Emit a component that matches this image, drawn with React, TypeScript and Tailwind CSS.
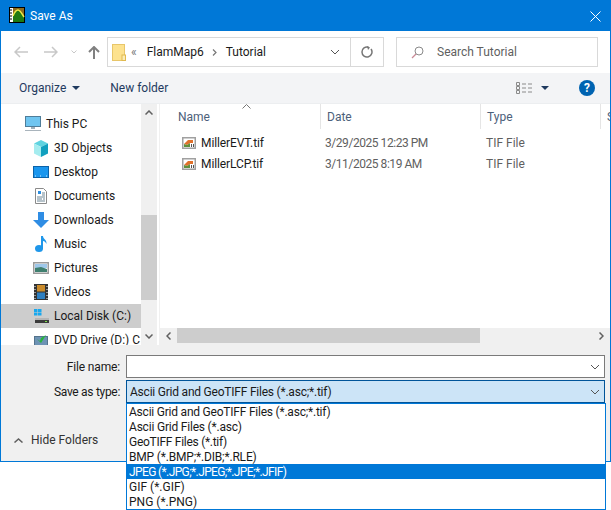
import type { ReactNode } from "react";

const font = { fontFamily: 'Roboto, "Liberation Sans", sans-serif' };

const types = [
  { label: "Ascii Grid and GeoTIFF Files (*.asc;*.tif)", track: "tracking-[-0.22px]" },
  { label: "Ascii Grid Files (*.asc)", track: "tracking-[-0.2px]" },
  { label: "GeoTIFF Files (*.tif)", track: "tracking-[-0.28px]" },
  { label: "BMP (*.BMP;*.DIB;*.RLE)", track: "tracking-[-0.18px]" },
  { label: "JPEG (*.JPG;*.JPEG;*.JPE;*.JFIF)", track: "tracking-[-0.62px]" },
  { label: "GIF (*.GIF)", track: "" },
  { label: "PNG (*.PNG)", track: "" },
];

function Chevron({ className = "" }: { className?: string }) {
  return (
    <svg width="10" height="6" viewBox="0 0 10 6" className={className}>
      <path d="M1 1l4 4 4-4" fill="none" stroke="#555" strokeWidth="1" />
    </svg>
  );
}

function Caret() {
  return (
    <svg width="8" height="4" viewBox="0 0 8 4">
      <path d="M0 0h8L4 4z" fill="#1f3a5f" />
    </svg>
  );
}

function AppIcon() {
  return (
    <svg width="16" height="16" viewBox="0 0 16 16" className="mr-[5px] mb-[2px]">
      <rect width="16" height="16" fill="#000" />
      <rect x="1" y="1" width="3" height="14" fill="#fff" />
      <path d="M1 3h2M1 6h2M1 9h2M1 12h2" stroke="#000" strokeWidth="1" />
      <rect x="4" y="1" width="11" height="14" fill="#8a6a1c" />
      <path d="M4 15V9c2-5 3-6 5-6s3 2 6 7v5z" fill="#1f7a12" />
      <path d="M4 9c2-5 3-6 5-6s3 2 6 7" fill="none" stroke="#f0e84a" strokeWidth="1.5" />
    </svg>
  );
}

function FolderIcon() {
  return (
    <svg width="14" height="17" viewBox="0 0 14 17">
      <rect x="0.5" y="0.5" width="12" height="16" fill="#fde28f" stroke="#e8c66a" />
      <rect x="10" y="11" width="3.5" height="5.5" fill="#fcecb5" stroke="#e0b94f" />
    </svg>
  );
}

function TifIcon() {
  return (
    <svg width="14" height="12" viewBox="0 0 14 12">
      <rect x="0.75" y="0.75" width="12.5" height="10.5" fill="#fff" stroke="#a0a0a0" strokeWidth="1.5" />
      <path d="M2 7l4-4h5v3H8L5 8z" fill="#e0702a" />
      <path d="M2 7l3 1 3-2v4H2z" fill="#5f8f3c" />
      <path d="M9 10V7h1v3zM11 10V7h1v3z" fill="#555" />
    </svg>
  );
}

const navIcons: Record<string, ReactNode> = {
  pc: (
    <svg width="16" height="16" viewBox="0 0 16 16">
      <rect x="0.5" y="0.5" width="15" height="10" fill="#6fc5f0" stroke="#4f7d99" />
      <rect x="6" y="11" width="4" height="2" fill="#9fb0ba" />
      <rect y="14" width="16" height="1" fill="#a9b4bc" />
    </svg>
  ),
  cube: (
    <svg width="16" height="17" viewBox="0 0 16 17">
      <path d="M8 0l7 3.500-7 3.500-7-3.500z" fill="#5fd3e0" />
      <path d="M1 3.500L8 7v10l-7-3.500z" fill="#a5ecef" />
      <path d="M15 3.500L8 7v10l7-3.500z" fill="#10a0bf" />
    </svg>
  ),
  desktop: (
    <svg width="16" height="12" viewBox="0 0 16 12">
      <rect x="0.5" y="0.5" width="15" height="11" fill="#1a96ee" stroke="#0b62a8" />
      <path d="M2 10h1M7 10h1M13 10h1" stroke="#d5ecff" strokeWidth="1" />
    </svg>
  ),
  docs: (
    <svg width="12" height="16" viewBox="0 0 12 16">
      <path d="M.5.5h8l3 3v12H.5z" fill="#fff" stroke="#8a8a8a" />
      <path d="M3 3h3v3H3z" fill="#2e8fe0" />
      <path d="M7 5h3M7 7h3M2 9h8M2 11h5M8 11h2M2 13h8" stroke="#6f8796" strokeWidth="1" />
    </svg>
  ),
  down: (
    <svg width="16" height="16" viewBox="0 0 16 16">
      <path d="M5 0h6v8h5l-8 8-8-8h5z" fill="#2f8de4" />
    </svg>
  ),
  music: (
    <svg width="12" height="16" viewBox="0 0 12 16">
      <ellipse cx="4" cy="12.500" rx="4" ry="3.500" fill="#1f97ea" />
      <path d="M6 0h2c0 3 4 3.500 3.500 8C10.500 6 9.500 5 8 5v8H6z" fill="#1f97ea" />
    </svg>
  ),
  pic: (
    <svg width="16" height="12" viewBox="0 0 16 12">
      <rect x="0.75" y="0.75" width="14.5" height="10.5" fill="#fff" stroke="#9a9a9a" strokeWidth="1.500" />
      <rect x="2" y="2" width="12" height="4" fill="#9fc8ea" />
      <path d="M2 6l6-1 6 2v3H2z" fill="#3f7f6f" />
    </svg>
  ),
  video: (
    <svg width="14" height="16" viewBox="0 0 14 16">
      <rect width="14" height="16" fill="#333" />
      <rect x="3" y="1" width="8" height="6.500" fill="#c98a2a" />
      <rect x="3" y="8.500" width="8" height="6.500" fill="#2f7fc0" />
      <path d="M1 2v1M1 5v1M1 8v1M1 11v1M1 14v1M13 2v1M13 5v1M13 8v1M13 11v1M13 14v1" stroke="#fff" strokeWidth="1" />
    </svg>
  ),
  disk: (
    <svg width="16" height="16" viewBox="0 0 16 16">
      <path d="M1 1h3.500v3H1zM5 1h3.500v3H5zM1 4.500h3.500v3H1zM5 4.500h3.500v3H5z" fill="#18a8ee" />
      <rect x="2" y="10" width="14" height="2" fill="#b5b5b5" />
      <rect x="2" y="12" width="14" height="3" fill="#3b3b3b" />
      <rect x="12" y="13" width="2" height="1" fill="#7be04a" />
    </svg>
  ),
  dvd: (
    <svg width="16" height="16" viewBox="0 0 16 16">
      <rect x="1.500" y="4.500" width="13" height="11" fill="#6d93b4" stroke="#54738c" />
      <path d="M4 7l4 4 5-8-5 3-1 3z" fill="#27b53c" />
    </svg>
  ),
};

const navItems = [
  { label: "This PC", icon: "pc", top: true },
  { label: "3D Objects", icon: "cube" },
  { label: "Desktop", icon: "desktop" },
  { label: "Documents", icon: "docs" },
  { label: "Downloads", icon: "down" },
  { label: "Music", icon: "music" },
  { label: "Pictures", icon: "pic" },
  { label: "Videos", icon: "video" },
  { label: "Local Disk (C:)", icon: "disk", selected: true },
  { label: "DVD Drive (D:) C", icon: "dvd" },
];

const files = [
  { name: "MillerEVT.tif", date: "3/29/2025 12:23 PM" },
  { name: "MillerLCP.tif", date: "3/11/2025 8:19 AM" },
];

export default function App() {
  return (
    <div className="relative w-[611px] h-[510px] bg-white text-[12px] text-[#1a1a1a] overflow-hidden" style={font}>
      <div className="flex flex-col w-[611px] h-[462px] border border-[#0078d7]">
        {/* title bar */}
        <div className="flex items-center h-[30px] shrink-0 bg-[#0078d7] pl-[8px] pr-[9px] text-white">
          <AppIcon />
          <span>Save As</span>
          <svg width="11" height="11" viewBox="0 0 11 11" className="ml-auto">
            <path d="M.5.500l10 10M10.500.500l-10 10" stroke="#fff" strokeWidth="1" />
          </svg>
        </div>

        {/* nav row */}
        <div className="flex items-center h-[42px] shrink-0 bg-white">
          <svg width="14" height="12" viewBox="0 0 14 12" className="ml-[13px]">
            <path d="M6 1L1 6l5 5M1 6h13" fill="none" stroke="#c8c8c8" strokeWidth="1.500" />
          </svg>
          <svg width="14" height="12" viewBox="0 0 14 12" className="ml-[16px]">
            <path d="M8 1l5 5-5 5M13 6H0" fill="none" stroke="#c8c8c8" strokeWidth="1.500" />
          </svg>
          <svg width="6" height="4" viewBox="0 0 6 4" className="ml-[13px]">
            <path d="M.5.500L3 3 5.500.500" fill="none" stroke="#c8c8c8" />
          </svg>
          <svg width="12" height="13" viewBox="0 0 12 13" className="ml-[11px]">
            <path d="M1 6l5-5 5 5M6 1v12" fill="none" stroke="#808080" strokeWidth="2" />
          </svg>
          <div className="flex items-center w-[277px] h-[30px] ml-[7px] border border-[#d9d9d9]">
            <div className="ml-[4px]">
              <FolderIcon />
            </div>
            <span className="ml-[5px] text-[#777] leading-none">«</span>
            <span className="ml-[10px]">FlamMap6</span>
            <svg width="5" height="7" viewBox="0 0 5 7" className="ml-[8px]">
              <path d="M1 .500L4 3.500 1 6.500" fill="none" stroke="#777" strokeWidth="1.200" />
            </svg>
            <span className="ml-[9px]">Tutorial</span>
            <Chevron className="ml-auto mr-[10px]" />
            <div className="flex items-center justify-center w-[33px] h-full border-l border-[#d9d9d9]">
              <svg width="12" height="12" viewBox="0 0 12 12">
                <path d="M10 3a5 5 0 1 1-2.500-1.800" fill="none" stroke="#777" strokeWidth="1.500" />
                <path d="M6 0l3 1.500L7 4z" fill="#777" />
              </svg>
            </div>
          </div>
          <div className="flex items-center w-[202px] h-[30px] ml-[12px] border border-[#d9d9d9] text-[#5f5f5f]">
            <svg width="13" height="13" viewBox="0 0 13 13" className="ml-[14px]">
              <circle cx="8" cy="5" r="4" fill="none" stroke="#8a8a8a" />
              <path d="M5 8l-4 4" stroke="#c98a96" strokeWidth="1.200" />
            </svg>
            <span className="ml-[13px]">Search Tutorial</span>
          </div>
        </div>

        {/* toolbar */}
        <div className="flex items-center h-[30px] shrink-0 bg-[#f3f4f6] text-[#1f3a5f]">
          <span className="ml-[18px]">Organize</span>
          <span className="ml-[6px] flex"><Caret /></span>
          <span className="ml-[30px]">New folder</span>
          <svg width="16" height="12" viewBox="0 0 16 12" className="ml-auto">
            <path d="M.5.500h3v3h-3zM.5 4.500h3v3h-3zM.5 8.500h3v3h-3z" fill="none" stroke="#8a8a8a" />
            <path d="M6 2h4M12 2h4M6 6h4M12 6h4M6 10h4M12 10h4" stroke="#8a8a8a" />
          </svg>
          <span className="ml-[9px] flex"><Caret /></span>
          <div className="flex items-center justify-center w-4 h-4 ml-[30px] mr-[15px] rounded-full bg-[#0063b1] text-white text-[12px] font-bold leading-none">
            ?
          </div>
        </div>

        {/* body */}
        <div className="flex flex-1 min-h-0 overflow-hidden border-t border-[#eceef0]">
          <div className="w-[140px] shrink-0 pt-[8px] overflow-hidden">
            {navItems.map((item) => (
              <div
                key={item.label}
                className={`flex items-center h-6 whitespace-nowrap ${item.selected ? "bg-[#cdcdcd]" : ""}`}
              >
                <span className={`flex items-center justify-center w-4 h-4 shrink-0 ${item.top ? "ml-[24px] mr-[5px]" : "ml-[32px] mr-[5px]"}`}>
                  {navIcons[item.icon]}
                </span>
                <span>{item.label}</span>
              </div>
            ))}
          </div>

          <div className="flex flex-col items-center justify-between w-4 shrink-0 bg-[#f0f0f0]">
            <div className="flex flex-col w-full">
              <div className="flex items-center justify-center h-[17px]">
                <svg width="8" height="5" viewBox="0 0 8 5">
                  <path d="M.5 4.500L4 1l3.500 3.500" fill="none" stroke="#606060" strokeWidth="1.500" />
                </svg>
              </div>
              <div className="w-full h-[85px] mt-[94px] bg-[#cdcdcd]" />
            </div>
            <div className="flex items-center justify-center h-[17px]">
              <svg width="8" height="5" viewBox="0 0 8 5">
                <path d="M.5.500L4 4 7.500.500" fill="none" stroke="#606060" strokeWidth="1.500" />
              </svg>
            </div>
          </div>

          <div className="flex flex-col flex-1 min-w-0 ml-[2px] border-l border-[#f0f0f0]">
            <div className="relative flex h-[25px] shrink-0 text-[#4c607a] overflow-hidden">
              <svg width="9" height="5" viewBox="0 0 9 5" className="absolute left-[82px] top-0">
                <path d="M.5 4.500L4.500.500l4 4" fill="none" stroke="#777" />
              </svg>
              <div className="w-[161px] shrink-0 pl-[18px] pt-[4px] border-r border-[#e5e5e5]">Name</div>
              <div className="w-[160px] shrink-0 pl-[6px] pt-[4px] border-r border-[#e5e5e5]">Date</div>
              <div className="w-[120px] shrink-0 pl-[6px] pt-[4px] border-r border-[#e5e5e5]">Type</div>
              <div className="shrink-0 pl-[6px] pt-[4px]">S</div>
            </div>
            <div className="flex-1 pt-[3px]">
              {files.map((f) => (
                <div key={f.name} className="flex items-center h-[21px] whitespace-nowrap">
                  <span className="flex ml-[22px] mr-[5px]">
                    <TifIcon />
                  </span>
                  <span className="w-[124px] text-[#1a1a1a] tracking-[-0.1px]">{f.name}</span>
                  <span className="w-[161px] text-[#5f5f5f] tracking-[-0.45px]">{f.date}</span>
                  <span className="text-[#5f5f5f]">TIF File</span>
                </div>
              ))}
            </div>
            <div className="flex items-start h-[17px] shrink-0 bg-[#f0f0f0]">
              <div className="flex items-center justify-center w-[17px] h-[15px]">
                <svg width="5" height="8" viewBox="0 0 5 8">
                  <path d="M4.500.500L1 4l3.500 3.500" fill="none" stroke="#606060" strokeWidth="1.500" />
                </svg>
              </div>
              <div className="w-[303px] h-[15px] bg-[#cdcdcd]" />
              <div className="flex items-center justify-center w-[17px] h-[15px] ml-auto">
                <svg width="5" height="8" viewBox="0 0 5 8">
                  <path d="M.5.500L4 4 .5 7.500" fill="none" stroke="#606060" strokeWidth="1.500" />
                </svg>
              </div>
            </div>
          </div>
        </div>

        {/* footer */}
        <div className="h-[116px] shrink-0 bg-[#f0f0f0] pt-[10px]">
          <div className="flex items-center h-[23px]">
            <span className="w-[119px] text-right tracking-[-0.15px]">File name:</span>
            <div className="flex items-center justify-end w-[479px] h-[23px] ml-[6px] pr-[4px] bg-white border border-[#7a7a7a]">
              <Chevron />
            </div>
          </div>
          <div className="flex items-center h-[23px] mt-[2px]">
            <span className="w-[119px] text-right tracking-[-0.3px]">Save as type:</span>
            <div className="flex items-center justify-between w-[479px] h-[23px] ml-[6px] pl-[3px] pr-[4px] bg-[#cce4f7] border border-[#005499] whitespace-nowrap">
              <span className={types[0].track}>{types[0].label}</span>
              <Chevron />
            </div>
          </div>
          <div className="flex items-center mt-[28px] ml-[13px]">
            <svg width="9" height="5" viewBox="0 0 9 5">
              <path d="M.5 4.500L4.500 1l4 3.500" fill="none" stroke="#606060" strokeWidth="1.500" />
            </svg>
            <span className="ml-[8px] text-[#333]">Hide Folders</span>
          </div>
        </div>
      </div>

      {/* open dropdown */}
      <div className="absolute left-[126px] top-[403px] w-[480px] h-[107px] bg-white border border-[#0078d7]">
        {types.map((t, i) => (
          <div
            key={t.label}
            className={`h-[15px] pl-[2px] leading-[17px] whitespace-nowrap ${t.track} ${i === 4 ? "bg-[#0078d7] text-white" : ""}`}
          >
            {t.label}
          </div>
        ))}
      </div>
    </div>
  );
}
